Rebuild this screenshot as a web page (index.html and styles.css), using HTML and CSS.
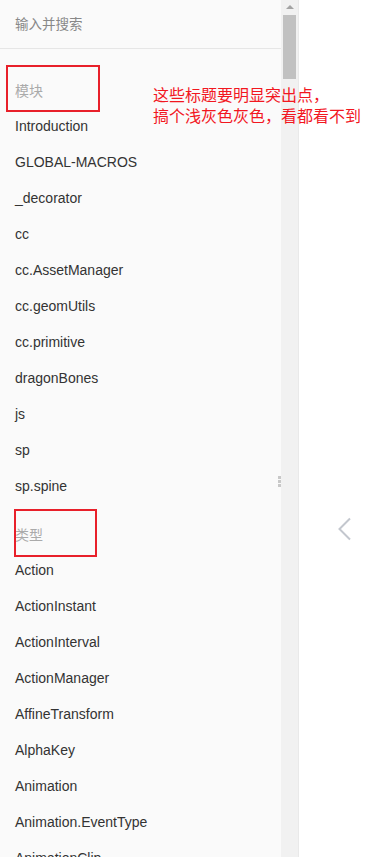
FILE: index.html
```html
<!DOCTYPE html>
<html lang="zh">
  <head>
    <meta charset="UTF-8" />
    <meta name="viewport" content="width=device-width, initial-scale=1.0" />
    <title>API</title>
    <link rel="stylesheet" href="styles.css">
  </head>
  <body>
    <div class="sidebar">
      <div class="nav">
        <div class="search">输入并搜索</div>
        <ul class="list">
          <li class="group-title">模块</li>
          <li>Introduction</li>
          <li>GLOBAL-MACROS</li>
          <li>_decorator</li>
          <li>cc</li>
          <li>cc.AssetManager</li>
          <li>cc.geomUtils</li>
          <li>cc.primitive</li>
          <li>dragonBones</li>
          <li>js</li>
          <li>sp</li>
          <li>sp.spine</li>
          <li class="group-title second">类型</li>
          <li>Action</li>
          <li>ActionInstant</li>
          <li>ActionInterval</li>
          <li>ActionManager</li>
          <li>AffineTransform</li>
          <li>AlphaKey</li>
          <li>Animation</li>
          <li>Animation.EventType</li>
          <li>AnimationClip</li>
        </ul>
        <span class="grip"><i></i><i></i><i></i></span>
      </div>
      <div class="scrollbar">
        <span class="arrow"></span>
        <span class="thumb"></span>
      </div>
    </div>
    <div class="main">
      <svg class="chevron" width="16" height="24" viewBox="0 0 16 24">
        <polyline points="13,1.5 2.5,12 13,22.5" fill="none" stroke="#c3c7ce" stroke-width="2" />
      </svg>
    </div>

    <!-- annotations on top of the screenshot -->
    <div class="mark mark-1"></div>
    <div class="mark mark-2"></div>
    <p class="note">这些标题要明显突出点，<br />搞个浅灰色灰色，看都看不到</p>
  </body>
</html>
```

FILE: styles.css
```css
body {
  margin: 0;
  padding: 0;
  height: 857px;
  overflow: hidden;
  display: flex;
  background-color: #fff;
  font-family: "Liberation Sans", Arial, "Noto Sans CJK SC", sans-serif;
}
.sidebar {
  display: flex;
  width: 299px;
  height: 857px;
  flex-shrink: 0;
}
.nav {
  position: relative;
  width: 282px;
  background-color: #fafafa;
  overflow: hidden;
}
.search {
  height: 48px;
  line-height: 46px;
  padding-left: 15px;
  border-bottom: 1px solid #e6e6e6;
  font-family: "Noto Sans CJK SC", sans-serif;
  font-size: 13.5px;
  color: #888;
}
.list {
  list-style: none;
  margin: 0;
  padding: 23px 0 0 15px;
}
.list li {
  height: 36px;
  line-height: 36px;
  font-size: 14px;
  color: #333;
  white-space: nowrap;
}
.list .group-title {
  font-family: "Noto Sans CJK SC", sans-serif;
  color: #aaa;
}
.list .second {
  margin-top: 12px;
}
.grip {
  position: absolute;
  left: 278px;
  top: 476px;
  display: flex;
  flex-direction: column;
  gap: 1px;
}
.grip i {
  width: 3px;
  height: 3px;
  background-color: #c8c8c8;
}
.scrollbar {
  width: 17px;
  background-color: #f1f1f1;
  border-right: 1px solid #e9e9e9;
  display: flex;
  flex-direction: column;
  align-items: center;
}
.arrow {
  margin-top: 5px;
  width: 0;
  height: 0;
  border-left: 4px solid transparent;
  border-right: 4px solid transparent;
  border-bottom: 4px solid #a3a3a3;
}
.thumb {
  margin-top: 6px;
  width: 13px;
  height: 64px;
  background-color: #c1c1c1;
}
.main {
  flex: 1;
  display: flex;
  align-items: flex-start;
  padding: 517px 0 0 38px;
}
.mark {
  position: absolute;
  border: 2px solid #e8202a;
}
.mark-1 {
  left: 6px;
  top: 65px;
  width: 90px;
  height: 43px;
}
.mark-2 {
  left: 14px;
  top: 509px;
  width: 79px;
  height: 44px;
}
.note {
  position: absolute;
  left: 153px;
  top: 84px;
  margin: 0;
  font-family: "Noto Sans CJK SC", sans-serif;
  font-size: 16px;
  line-height: 21px;
  color: #f2171f;
}
```
